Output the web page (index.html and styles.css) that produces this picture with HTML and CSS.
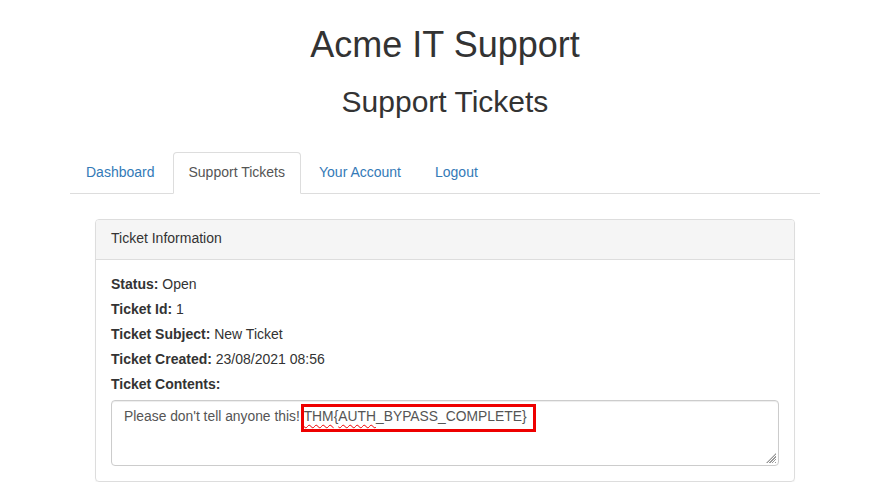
FILE: index.html
```html
<!DOCTYPE html>
<html>
<head>
<meta charset="utf-8">
<link rel="stylesheet" href="styles.css">
</head>
<body>
<div class="container">
  <h1 class="title">Acme IT Support</h1>
  <h2 class="subtitle">Support Tickets</h2>
  <ul class="tabs">
    <li><a href="#">Dashboard</a></li>
    <li class="active"><a href="#">Support Tickets</a></li>
    <li><a href="#">Your Account</a></li>
    <li><a href="#">Logout</a></li>
  </ul>
  <div class="panel">
    <div class="panel-heading">Ticket Information</div>
    <div class="panel-body">
      <div class="row"><b>Status:</b> Open</div>
      <div class="row"><b>Ticket Id:</b> 1</div>
      <div class="row"><b>Ticket Subject:</b> New Ticket</div>
      <div class="row"><b>Ticket Created:</b> 23/08/2021 08:56</div>
      <div class="row"><b>Ticket Contents:</b></div>
      <div class="textarea">Please don't tell anyone this! <span class="flag"><span class="spell">THM</span>{<span class="spell">AUTH</span>_BYPASS_COMPLETE}</span><span class="grip"></span></div>
    </div>
  </div>
</div>
</body>
</html>
```
FILE: styles.css
```css
* { box-sizing: border-box; }
html, body { margin: 0; padding: 0; background: #fff; }
body {
  font-family: "Liberation Sans", Arial, Helvetica, sans-serif;
  font-size: 14px;
  line-height: 20px;
  color: #333;
}
.container {
  width: 750px;
  margin-left: 70px;
}
.title {
  margin: 25px 0 0;
  font-size: 36px;
  line-height: 40px;
  font-weight: 400;
  text-align: center;
}
.subtitle {
  margin: 20px 0 0;
  font-size: 30px;
  line-height: 33px;
  font-weight: 400;
  text-align: center;
}
.tabs {
  list-style: none;
  margin: 34px 0 0;
  padding: 0;
  display: flex;
  border-bottom: 1px solid #ddd;
}
.tabs li {
  margin-right: 2px;
  margin-bottom: -1px;
}
.tabs a {
  display: block;
  padding: 9px 15px 11px;
  line-height: 20px;
  color: #337ab7;
  text-decoration: none;
  border: 1px solid transparent;
  border-radius: 4px 4px 0 0;
}
.tabs li.active a {
  color: #555;
  background: #fff;
  border-color: #ddd #ddd transparent;
}
.panel {
  margin: 25px 25px 0;
  border: 1px solid #ddd;
  border-radius: 4px;
  box-shadow: 0 1px 1px rgba(0,0,0,0.05);
}
.panel-heading {
  padding: 8px 15px 11px;
  background: #f5f5f5;
  border-bottom: 1px solid #ddd;
  border-radius: 3px 3px 0 0;
}
.panel-body {
  padding: 14px 15px 15px;
}
.row {
  margin-bottom: 5px;
}
.row b { font-weight: 700; }
.textarea {
  position: relative;
  height: 66px;
  margin-top: 6px;
  padding: 5px 12px;
  border: 1px solid #ccc;
  border-radius: 4px;
  box-shadow: inset 0 1px 1px rgba(0,0,0,0.075);
  color: #555;
  font-size: 13.85px;
}
.flag {
  position: relative;
}
.flag::before {
  content: "";
  position: absolute;
  left: -3px;
  right: -9px;
  top: -4px;
  bottom: -8px;
  border: 3px solid #e00;
  pointer-events: none;
}
.spell {
  text-decoration: underline wavy #e00;
  text-decoration-thickness: 1.3px;
  text-underline-offset: 3px;
}
.grip {
  position: absolute;
  right: 2px;
  bottom: 2px;
  width: 10px;
  height: 10px;
  background: repeating-linear-gradient(135deg, transparent 0 1px, #999 1px 2px);
  clip-path: polygon(100% 0, 100% 100%, 0 100%);
}
```
